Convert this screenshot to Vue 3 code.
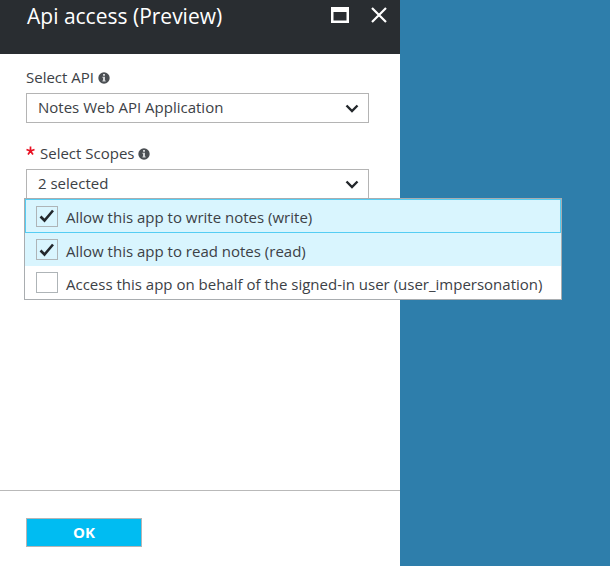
<script setup>
import { ref, computed } from 'vue'

const apis = ['Notes Web API Application']
const api = ref(apis[0])

const scopes = ref([
  { id: 'write', label: 'Allow this app to write notes (write)', checked: true },
  { id: 'read', label: 'Allow this app to read notes (read)', checked: true },
  { id: 'user', label: 'Access this app on behalf of the signed-in user (user_impersonation)', checked: false },
])
const focused = ref('write')
const summary = computed(() => `${scopes.value.filter((s) => s.checked).length} selected`)
</script>

<template>
  <div class="portal">
    <main class="blade">
      <header class="blade-head">
        <h1>Api access (Preview)</h1>
        <button type="button" class="head-btn" aria-label="Maximize">
          <svg width="20" height="18" viewBox="0 0 20 18">
            <path fill="#fff" fill-rule="evenodd" d="M1 1h18v16H1zM3.5 6v8.5h13V6z" />
          </svg>
        </button>
        <button type="button" class="head-btn" aria-label="Close">
          <svg width="18" height="18" viewBox="0 0 18 18">
            <path fill="none" stroke="#fff" stroke-width="2.2" d="M2 2l14 14M16 2L2 16" />
          </svg>
        </button>
      </header>

      <form class="blade-body" @submit.prevent>
        <div class="field">
          <div class="label-row">
            <label for="api">Select API</label>
            <svg class="info" width="12" height="12" viewBox="0 0 12 12">
              <circle cx="6" cy="6" r="5.7" fill="#4b4f53" />
              <path fill="#d4d6d8" d="M5 2h2v1.7H5zM4.4 4.7H7v3.9h.7v1H4.4v-1H5V5.7h-.6z" />
            </svg>
          </div>
          <div class="select-box">
            <select id="api" v-model="api">
              <option v-for="a in apis" :key="a">{{ a }}</option>
            </select>
            <svg class="chevron" width="14" height="10" viewBox="0 0 14 10">
              <path fill="none" stroke="#23272b" stroke-width="2.4" d="M1.5 1.5L7 7l5.5-5.5" />
            </svg>
          </div>
        </div>

        <div class="field">
          <div class="label-row">
            <svg class="required" width="9" height="10" viewBox="0 0 9 10">
              <path fill="none" stroke="#e81123" stroke-width="1.7" d="M4.5.5V5M.5 3.5l4 1.5 4-1.5M2 8.5L4.5 5 7 8.5" />
            </svg>
            <label for="scopes">Select Scopes</label>
            <svg class="info" width="12" height="12" viewBox="0 0 12 12">
              <circle cx="6" cy="6" r="5.7" fill="#4b4f53" />
              <path fill="#d4d6d8" d="M5 2h2v1.7H5zM4.4 4.7H7v3.9h.7v1H4.4v-1H5V5.7h-.6z" />
            </svg>
          </div>
          <div class="select-box">
            <select id="scopes">
              <option>{{ summary }}</option>
            </select>
            <svg class="chevron" width="14" height="10" viewBox="0 0 14 10">
              <path fill="none" stroke="#23272b" stroke-width="2.4" d="M1.5 1.5L7 7l5.5-5.5" />
            </svg>
            <div class="menu">
              <label
                v-for="s in scopes"
                :key="s.id"
                class="option"
                :class="{ on: s.checked, focused: s.id === focused }"
              >
                <span class="check">
                  <input v-model="s.checked" type="checkbox" @focus="focused = s.id" />
                  <svg v-if="s.checked" width="16" height="14" viewBox="0 0 16 14">
                    <path fill="none" stroke="#23272b" stroke-width="2.6" d="M1.5 7.5l4 4L14 1.5" />
                  </svg>
                </span>
                <span class="option-text">{{ s.label }}</span>
              </label>
            </div>
          </div>
        </div>
      </form>

      <footer class="blade-foot">
        <button type="button" class="ok">OK</button>
      </footer>
    </main>
  </div>
</template>

<style>
body {
  background: #2e7eab;
}
</style>

<style scoped>
.portal {
  display: grid;
  grid-template-columns: 400fr 210fr;
  min-height: 100vh;
  font-family: "Open Sans", "Noto Sans", sans-serif;
  font-size: 15px;
  line-height: 20px;
  color: #3c4146;
}
.blade {
  display: flex;
  flex-direction: column;
  background: #fff;
}
.blade-head {
  display: flex;
  align-items: flex-start;
  gap: 20px;
  box-sizing: border-box;
  height: 54px;
  padding: 2px 12px 0 27px;
  background: #292d31;
}
h1 {
  flex: 1;
  margin: 0;
  font-size: 21px;
  font-weight: 400;
  line-height: 28px;
  color: #fff;
  white-space: nowrap;
}
.head-btn {
  display: block;
  margin: 4px 0 0;
  padding: 0;
  border: 0;
  background: none;
  line-height: 0;
}
.blade-body {
  flex: 1;
  display: flex;
  flex-direction: column;
  gap: 21px;
  padding: 14px 31px 0 26px;
}
.label-row {
  display: flex;
  align-items: center;
  gap: 4px;
  height: 20px;
  margin-bottom: 5px;
}
.label-row label {
  padding-bottom: 2px;
}
.required {
  align-self: flex-start;
  margin: 2px 1px 0 0;
}
.select-box {
  position: relative;
}
select {
  appearance: none;
  display: block;
  box-sizing: border-box;
  width: 100%;
  height: 30px;
  margin: 0;
  padding: 0 36px 2px 11px;
  border: 1px solid #b4b4b4;
  border-radius: 0;
  background: #fff;
  color: #3c4146;
  font: inherit;
}
.chevron {
  position: absolute;
  right: 10px;
  top: 11px;
  pointer-events: none;
}
.menu {
  position: absolute;
  top: 29px;
  left: -2px;
  box-sizing: border-box;
  min-width: 100%;
  width: max-content;
  border: 1px solid #a9adb0;
  background: #fff;
}
.option {
  display: flex;
  align-items: center;
  gap: 8px;
  box-sizing: border-box;
  height: 33px;
  padding: 0 18px 0 10px;
  border: 1px solid transparent;
}
.option.on {
  background: #d9f5fe;
}
.option.focused {
  height: 34px;
  border-color: #55cdf3;
}
.option-text {
  padding-top: 2px;
}
.check {
  display: grid;
  place-items: center;
}
.check > * {
  grid-area: 1 / 1;
}
.check svg {
  pointer-events: none;
}
.check input {
  appearance: none;
  box-sizing: border-box;
  width: 22px;
  height: 21px;
  margin: 0;
  border: 1px solid #aeb4b7;
  background: #fff;
}
.on .check input {
  background: #d9f5fe;
}
.blade-foot {
  padding: 27px 26px 19px;
  border-top: 1px solid #b9b9b9;
}
.ok {
  display: block;
  box-sizing: border-box;
  width: 116px;
  height: 29px;
  padding: 0 0 2px;
  border: 1px solid #b5b5b5;
  background: #00bcf2;
  color: #fff;
  font: inherit;
  font-weight: 700;
}
</style>
